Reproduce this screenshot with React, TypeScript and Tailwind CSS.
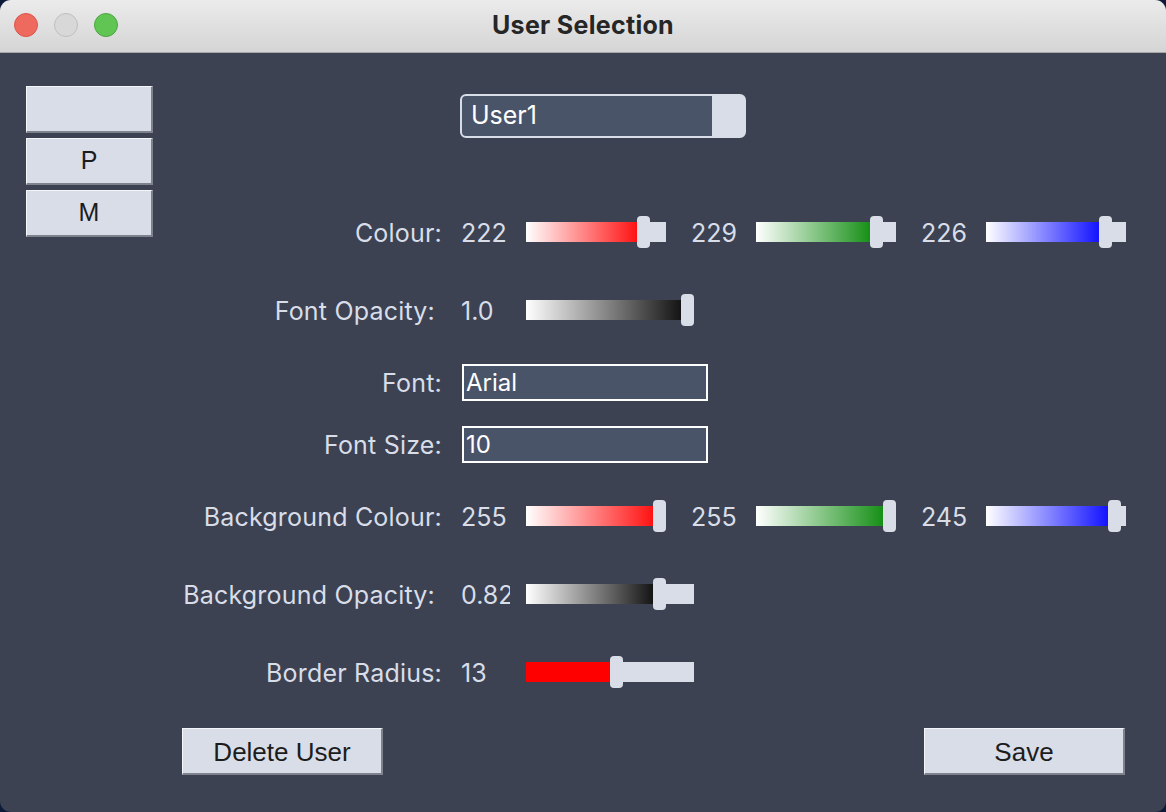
import { useState } from "react";

type SliderProps = {
  value: number;
  max: number;
  width: number;
  from: string;
  to: string;
  solid?: boolean;
};

const Slider = ({ value, max, width, from, to, solid }: SliderProps) => {
  const handleW = 13;
  const left = Math.round((value / max) * (width - handleW));
  return (
    <div className="relative h-[32px] shrink-0" style={{ width }}>
      <div className="absolute left-0 right-0 top-[6px] h-[20px] bg-[#d8dde8]" />
      <div
        className="absolute left-0 top-[6px] h-[20px]"
        style={{
          width: left + 2,
          background: solid ? to : `linear-gradient(to right, ${from}, ${to})`,
        }}
      />
      <div
        className="absolute top-0 h-[32px] w-[13px] rounded-[4px] bg-[#d8dde8]"
        style={{ left }}
      />
    </div>
  );
};

const Label = ({ text, pr = 0 }: { text: string; pr?: number }) => (
  <div
    className="mt-[3px] w-[260px] shrink-0 whitespace-nowrap text-right text-[25px] tracking-[0.2px] text-[#d8dde8]"
    style={{ paddingRight: pr }}
  >
    {text}
  </div>
);

// value column is 65px, the text itself clipped at 49px (0.82 gets cut like the original)
const Value = ({ text }: { text: string }) => (
  <div className="mt-[3px] w-[65px] shrink-0 whitespace-nowrap text-[25px] text-[#d8dde8]">
    <div className="w-[49px] overflow-hidden">{text}</div>
  </div>
);

const RgbRow = ({ label, rgb }: { label: string; rgb: number[] }) => (
  <div className="flex h-[32px] items-center">
    <Label text={label} />
    <div className="ml-[19px] flex items-center gap-[25px]">
      <div className="flex items-center">
        <Value text={String(rgb[0])} />
        <Slider value={rgb[0]} max={255} width={140} from="#ffffff" to="#ff0f0f" />
      </div>
      <div className="flex items-center">
        <Value text={String(rgb[1])} />
        <Slider value={rgb[1]} max={255} width={140} from="#ffffff" to="#138e13" />
      </div>
      <div className="flex items-center">
        <Value text={String(rgb[2])} />
        <Slider value={rgb[2]} max={255} width={140} from="#ffffff" to="#0f0fff" />
      </div>
    </div>
  </div>
);

const SideButton = ({ text }: { text: string }) => (
  <button className="h-[47px] w-[127px] border-b-2 border-l border-r-2 border-t border-b-[#7d828c] border-l-[#f4f6fa] border-r-[#7d828c] border-t-[#f4f6fa] bg-[#d8dde8] font-['Liberation_Sans',sans-serif] text-[25px] text-[#1c1c1c]">
    {text}
  </button>
);

const FormButton = ({ text }: { text: string }) => (
  <button className="h-[47px] w-[201px] border-b-2 border-l border-r-2 border-t border-b-[#7d828c] border-l-[#f4f6fa] border-r-[#7d828c] border-t-[#f4f6fa] bg-[#d8dde8] pt-[2px] font-['Liberation_Sans',sans-serif] text-[26px] text-[#1c1c1c]">
    {text}
  </button>
);

const App = () => {
  const [font, setFont] = useState("Arial");
  const [size, setSize] = useState("10");

  return (
    <div className="h-[812px] w-[1166px] bg-[#0d1b38] font-['Inter',sans-serif]">
      <div className="flex h-full w-full flex-col overflow-hidden rounded-[11px] bg-[#3c4252]">
        {/* title bar */}
        <div className="relative flex h-[53px] shrink-0 items-center justify-center border-b border-b-[#a8a8a8] bg-gradient-to-b from-[#ebebeb] to-[#d5d5d5]">
          <div className="absolute left-[14px] top-[13px] flex gap-[16px]">
            <div className="h-[24px] w-[24px] rounded-full border border-[#d9574c] bg-[#ee6a5f]" />
            <div className="h-[24px] w-[24px] rounded-full border border-[#bfbfbf] bg-[#d8d8d8]" />
            <div className="h-[24px] w-[24px] rounded-full border border-[#4ea543] bg-[#61c554]" />
          </div>
          <span className="text-[25px] font-bold tracking-[0.3px] text-[#262626]">User Selection</span>
        </div>

        {/* body */}
        <div className="flex flex-1 pl-[26px]">
          <div className="flex w-[127px] shrink-0 flex-col gap-[5px] pt-[33px]">
            <SideButton text="" />
            <SideButton text="P" />
            <SideButton text="M" />
          </div>

          <div className="ml-[29px] flex w-[944px] flex-col pt-[41px]">
            {/* user combo */}
            <div className="ml-[278px] flex h-[44px] w-[286px] overflow-hidden rounded-[6px] border-2 border-[#d8dde8] bg-[#d8dde8]">
              <div className="flex w-[250px] items-center bg-[#4a5469] pl-[9px] text-[25px] text-white">
                User1
              </div>
            </div>

            <div className="mt-[78px]">
              <RgbRow label="Colour:" rgb={[222, 229, 226]} />
            </div>

            <div className="mt-[46px] flex h-[32px] items-center">
              <Label text="Font Opacity:" pr={7} />
              <div className="ml-[19px] flex items-center">
                <Value text="1.0" />
                <Slider value={1} max={1} width={168} from="#ffffff" to="#111111" />
              </div>
            </div>

            <div className="mt-[38px] flex h-[37px] items-center">
              <Label text="Font:" />
              <input
                value={font}
                onChange={(e) => setFont(e.target.value)}
                className="ml-[20px] h-[37px] w-[246px] border-2 border-white bg-[#4a5469] pl-[2px] text-[24px] text-white outline-none"
              />
            </div>

            <div className="mt-[25px] flex h-[37px] items-center">
              <Label text="Font Size:" />
              <input
                value={size}
                onChange={(e) => setSize(e.target.value)}
                className="ml-[20px] h-[37px] w-[246px] border-2 border-white bg-[#4a5469] pl-[2px] text-[24px] text-white outline-none"
              />
            </div>

            <div className="mt-[37px]">
              <RgbRow label="Background Colour:" rgb={[255, 255, 245]} />
            </div>

            <div className="mt-[46px] flex h-[32px] items-center">
              <Label text="Background Opacity:" pr={7} />
              <div className="ml-[19px] flex items-center">
                <Value text="0.82" />
                <Slider value={0.82} max={1} width={168} from="#ffffff" to="#111111" />
              </div>
            </div>

            <div className="mt-[46px] flex h-[32px] items-center">
              <Label text="Border Radius:" />
              <div className="ml-[19px] flex items-center">
                <Value text="13" />
                <Slider value={13} max={24} width={168} from="#ff0000" to="#ff0000" solid />
              </div>
            </div>

            <div className="mt-[40px] flex w-[943px] justify-between">
              <FormButton text="Delete User" />
              <FormButton text="Save" />
            </div>
          </div>
        </div>
      </div>
    </div>
  );
};

export default App;
